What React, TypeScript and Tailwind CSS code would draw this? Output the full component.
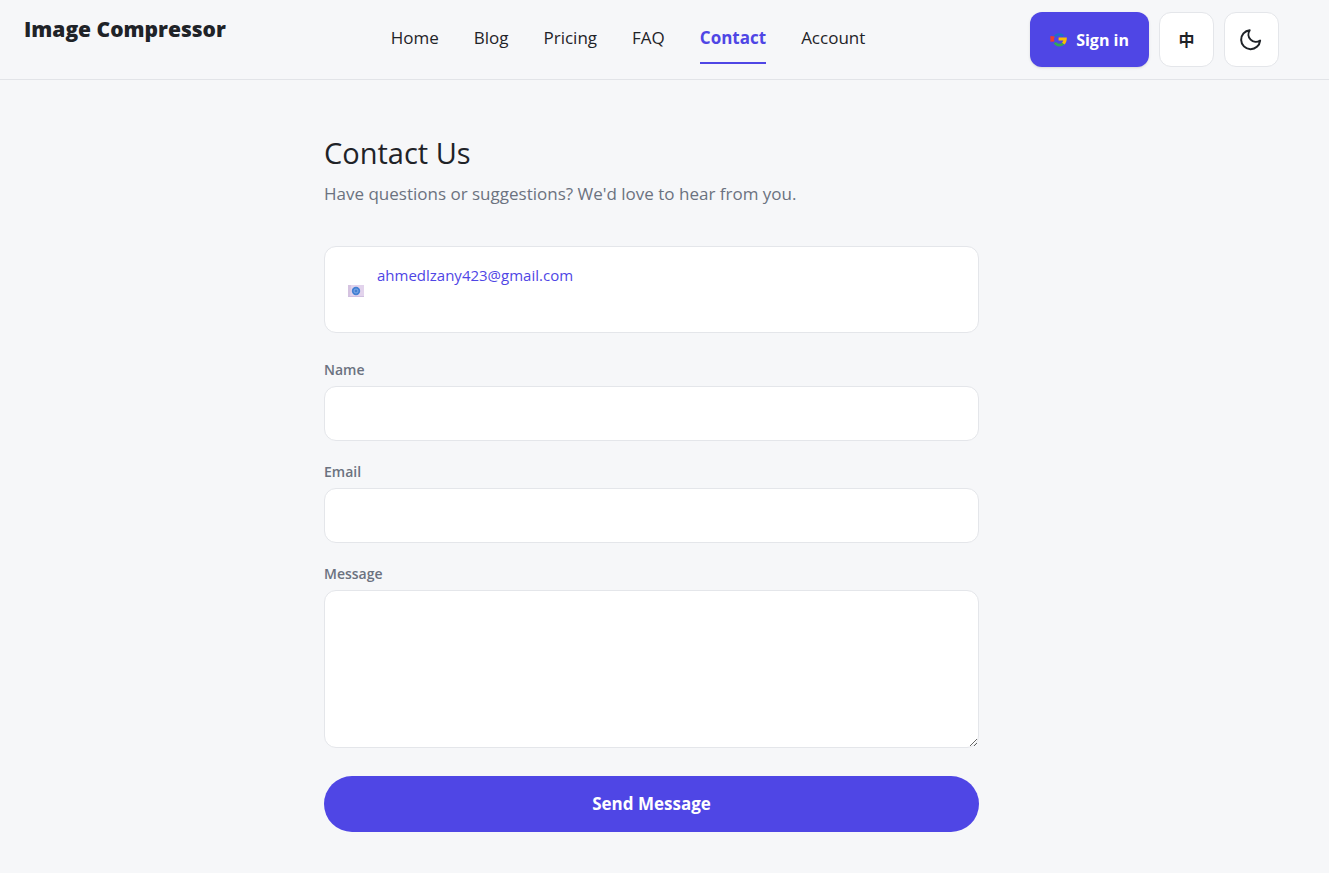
import React from "react";

const links = ["Home", "Blog", "Pricing", "FAQ", "Contact", "Account"];

function GoogleMark() {
  return (
    <svg width="18" height="14" viewBox="0 0 18 14" fill="none" aria-hidden="true">
      <path d="M4.6 3.9C6.2 1.2 10.6 0.6 13.2 2.8" stroke="#1a73c8" strokeWidth="2.4" />
      <path d="M0.4 3L4.8 3.6L3.8 6L4.4 8.4L0.4 8.8Z" fill="#ee3b2f" />
      <path d="M4.8 9.6C6.6 12.8 11.6 13 13.8 10" stroke="#34a853" strokeWidth="2.6" />
      <path d="M8.6 4.4H16.8C16.9 7.4 16.2 9.8 14.4 11.4L12 9.6C12.8 9 13.2 8.3 13.3 7.6H8.6Z" fill="#fbbc05" />
    </svg>
  );
}

function MailPicture() {
  return (
    <svg width="16" height="12" viewBox="0 0 16 12" className="mt-[3px] shrink-0" aria-hidden="true">
      <rect width="16" height="12" fill="#e2d3ec" />
      <path d="M0 0H3L2 12H0Z" fill="#d5c3e0" />
      <path d="M0 11H16V12H0Z" fill="#cfbfe0" />
      <circle cx="8" cy="6" r="4.2" fill="#4380d3" />
      <circle cx="8" cy="6" r="2" fill="none" stroke="#86aee6" strokeWidth="0.9" />
    </svg>
  );
}

function MoonIcon() {
  return (
    <svg width="24" height="24" viewBox="0 0 24 24" fill="none" stroke="#1f2328" strokeWidth="2" strokeLinecap="round" strokeLinejoin="round" aria-hidden="true">
      <path d="M21.1 12.6A9.5 9.5 0 1 1 10.7 2.2a7.5 7.5 0 0 0 10.4 10.4z" />
    </svg>
  );
}

const field = "block w-full rounded-xl border border-[#e4e6ea] bg-white px-4 text-base outline-none focus:border-[#4f46e5]";
const label = "mb-1.5 block text-sm leading-5 font-semibold text-[#6b7280]";
const square = "flex size-[55px] items-center justify-center rounded-xl border border-[#e4e6ea] bg-white";

export default function App() {
  return (
    <div className="min-h-screen bg-[#f6f7f9] font-['Open_Sans','Noto_Sans_CJK_SC',sans-serif] text-[#1f2328]">
      <header className="flex items-start justify-between border-b border-[#e2e4e8] py-3 pr-[50px] pl-6">
        <a href="#" className="text-[21px] leading-[34px] font-extrabold">Image Compressor</a>
        <nav className="flex gap-[35px] text-[17px] leading-6 font-medium">
          {links.map((name) => (
            <a
              key={name}
              href="#"
              className={
                name === "Contact"
                  ? "border-b-2 border-[#4f46e5] pt-3.5 pb-3 font-bold text-[#4f46e5]"
                  : "border-b-2 border-transparent pt-3.5 pb-3"
              }
            >
              {name}
            </a>
          ))}
        </nav>
        <div className="flex gap-2.5">
          <button type="button" className="flex h-[55px] items-center gap-2 rounded-xl bg-[#4f46e5] px-5 text-base font-bold text-white shadow-sm">
            <GoogleMark />
            Sign in
          </button>
          <button type="button" aria-label="中文" className={square}>
            <span className="text-base leading-6 font-bold">中</span>
          </button>
          <button type="button" aria-label="Dark mode" className={square}>
            <MoonIcon />
          </button>
        </div>
      </header>

      <main className="pr-[26px] pb-10">
        <div className="mx-auto max-w-[655px] pt-[53px]">
          <h1 className="text-[29px] leading-10">Contact Us</h1>
          <p className="mt-[7px] text-[17px] leading-7 text-[#6b7280]">Have questions or suggestions? We'd love to hear from you.</p>

          <div className="mt-[38px] flex h-[87px] items-center gap-[13px] rounded-xl border border-[#e4e6ea] bg-white px-[23px]">
            <MailPicture />
            <p className="pb-[30px] text-[15px] leading-6">
              <a href="mailto:ahmedlzany423@gmail.com" className="text-[#4f46e5]">ahmedlzany423@gmail.com</a>
            </p>
          </div>

          <form className="mt-[27px]">
            <label htmlFor="name" className={label}>Name</label>
            <input id="name" type="text" className={`${field} h-[55px]`} />
            <label htmlFor="email" className={`${label} mt-[21px]`}>Email</label>
            <input id="email" type="email" className={`${field} h-[55px]`} />
            <label htmlFor="message" className={`${label} mt-[21px]`}>Message</label>
            <textarea id="message" className={`${field} h-[158px] resize-y py-3`} />
            <button type="button" className="mt-7 block h-14 w-full rounded-full bg-[#4f46e5] text-[17px] font-bold text-white">Send Message</button>
          </form>
        </div>
      </main>
    </div>
  );
}
